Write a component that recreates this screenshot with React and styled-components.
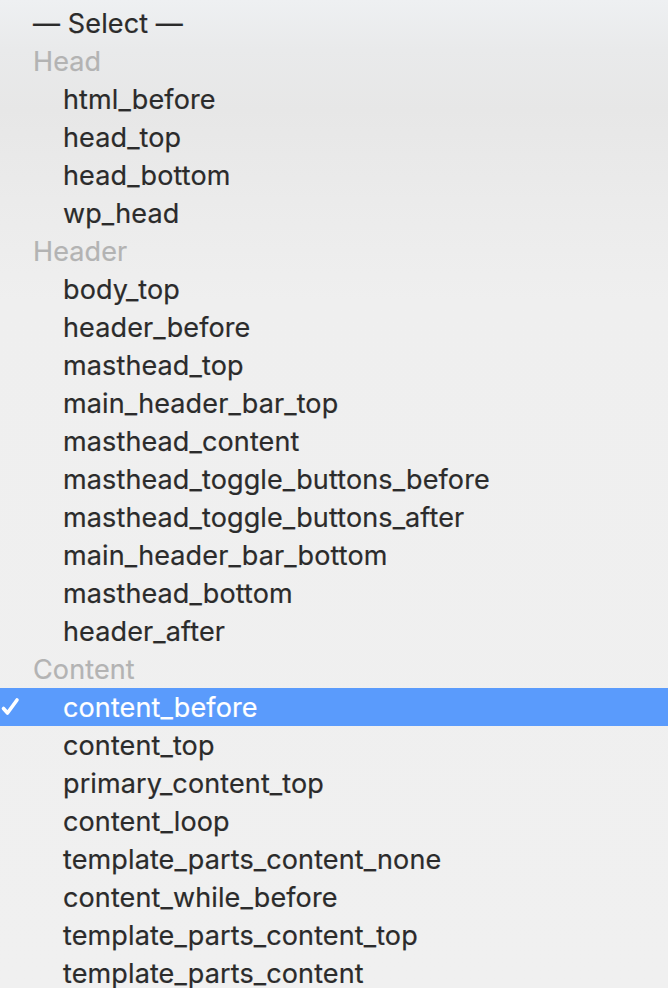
import React from "react";
import styled, { createGlobalStyle } from "styled-components";

const GlobalStyle = createGlobalStyle`
  html, body {
    margin: 0;
    padding: 0;
    background: #f0f0f0;
  }
  body {
    font-family: Inter, "Helvetica Neue", "Liberation Sans", sans-serif;
  }
`;

const groups = [
  { label: "Head", items: ["html_before", "head_top", "head_bottom", "wp_head"] },
  {
    label: "Header",
    items: [
      "body_top",
      "header_before",
      "masthead_top",
      "main_header_bar_top",
      "masthead_content",
      "masthead_toggle_buttons_before",
      "masthead_toggle_buttons_after",
      "main_header_bar_bottom",
      "masthead_bottom",
      "header_after",
    ],
  },
  {
    label: "Content",
    items: [
      "content_before",
      "content_top",
      "primary_content_top",
      "content_loop",
      "template_parts_content_none",
      "content_while_before",
      "template_parts_content_top",
      "template_parts_content",
    ],
  },
];

const selected = "content_before";

const CheckIcon = () => (
  <Check width="20" height="20" viewBox="0 0 20 20">
    <path
      d="M3.5 11.5 L7.5 16 L17 3"
      fill="none"
      stroke="currentColor"
      strokeWidth="3.6"
      strokeLinecap="round"
      strokeLinejoin="round"
    />
  </Check>
);

const App = () => {
  return (
    <>
      <GlobalStyle />
      <Menu>
        <Option $level={0}>— Select —</Option>
        {groups.map((g) => (
          <React.Fragment key={g.label}>
            <GroupLabel>{g.label}</GroupLabel>
            {g.items.map((item) => (
              <Option key={item} $level={1} $active={item === selected}>
                {item === selected && <CheckIcon />}
                {item}
              </Option>
            ))}
          </React.Fragment>
        ))}
      </Menu>
    </>
  );
};

export default App;

const Menu = styled.div`
  width: 668px;
  height: 988px;
  overflow: hidden;
  padding-top: 4px;
  box-sizing: border-box;
  background: linear-gradient(
    180deg,
    #eef0f2 0px,
    #e9eaeb 50px,
    #e7e7e7 110px,
    #ebebeb 200px,
    #efefef 300px,
    #f0f0f0 988px
  );
`;

const Row = styled.div`
  position: relative;
  height: 38px;
  display: flex;
  align-items: center;
  font-size: 27px;
  letter-spacing: 0.12px;
  white-space: nowrap;
  -webkit-text-stroke: 0.2px currentColor;
`;

const Option = styled(Row)`
  padding-left: ${(p) => (p.$level ? 63 : 33)}px;
  color: ${(p) => (p.$active ? "#ffffff" : "#2b2b2b")};
  background: ${(p) => (p.$active ? "#5a9bfc" : "transparent")};
`;

const GroupLabel = styled(Row)`
  padding-left: 33px;
  color: #b3b3b3;
`;

const Check = styled.svg`
  position: absolute;
  left: 0px;
  top: 9px;
`;
